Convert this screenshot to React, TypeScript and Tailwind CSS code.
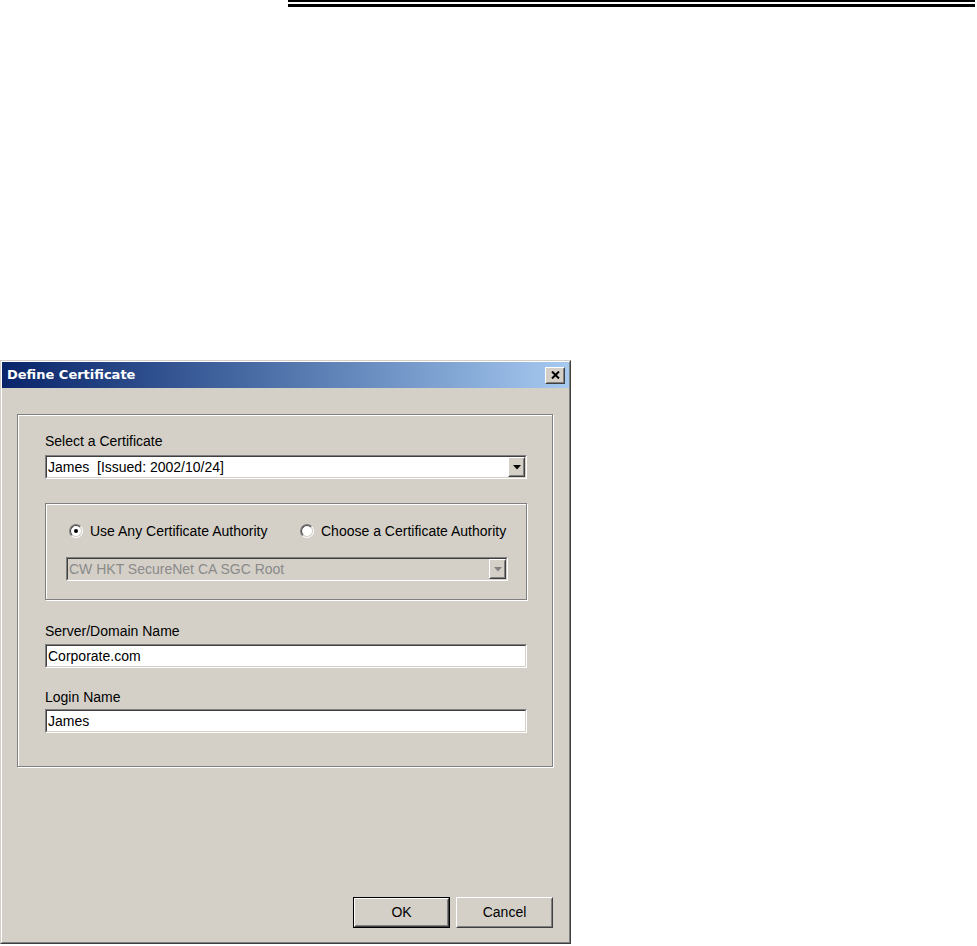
import type { ReactNode } from 'react';

// classic 3D bevels
const raisedOuter = 'border border-t-white border-l-white border-r-[#404040] border-b-[#404040]';
const raisedInner = 'border border-t-[#d4d0c8] border-l-[#d4d0c8] border-r-[#808080] border-b-[#808080]';
const sunkenOuter = 'border border-t-[#808080] border-l-[#808080] border-r-white border-b-white';
const sunkenInner = 'border border-t-[#404040] border-l-[#404040] border-r-[#d4d0c8] border-b-[#d4d0c8]';

function Arrow({ disabled = false }: { disabled?: boolean }) {
  return (
    <svg width="8" height="5" viewBox="0 0 8 5">
      <path d="M0 0h8L4 4.5z" fill={disabled ? '#808080' : '#000'} />
    </svg>
  );
}

function DropButton({ disabled = false }: { disabled?: boolean }) {
  return (
    <div className={`h-full w-[17px] ${raisedOuter} bg-[#d4d0c8]`}>
      <div className={`flex h-full items-center justify-center ${raisedInner}`}>
        <Arrow disabled={disabled} />
      </div>
    </div>
  );
}

function Field({
  children,
  width,
  combo = false,
  disabled = false,
}: {
  children: ReactNode;
  width: string;
  combo?: boolean;
  disabled?: boolean;
}) {
  return (
    <div className={`h-[24px] ${width} ${sunkenOuter}`}>
      <div className={`flex h-full items-center ${sunkenInner} ${disabled ? 'bg-[#d4d0c8]' : 'bg-white'}`}>
        <span
          className={`flex-1 whitespace-pre pl-[1px] leading-[16px] ${disabled ? 'text-[#8a8a8a]' : 'text-black'}`}
        >
          {children}
        </span>
        {combo && <DropButton disabled={disabled} />}
      </div>
    </div>
  );
}

function Radio({ label, checked = false, className = '' }: { label: string; checked?: boolean; className?: string }) {
  return (
    <div className={`flex items-center gap-[7px] ${className}`}>
      <div className="h-[14px] w-[14px] rounded-full border border-t-[#808080] border-l-[#808080] border-r-white border-b-white">
        <div className="flex h-full items-center justify-center rounded-full border border-t-[#404040] border-l-[#404040] border-r-[#d4d0c8] border-b-[#d4d0c8] bg-white">
          {checked && <div className="h-[4px] w-[4px] rounded-full bg-black" />}
        </div>
      </div>
      <span className="leading-[16px]">{label}</span>
    </div>
  );
}

function Button({ label, isDefault = false }: { label: string; isDefault?: boolean }) {
  return (
    <div className={`h-[31px] w-[97px] bg-[#d4d0c8] ${isDefault ? 'border border-black' : ''}`}>
      <div className={`h-full ${raisedOuter}`}>
        <div className={`flex h-full items-center justify-center ${raisedInner}`}>{label}</div>
      </div>
    </div>
  );
}

const groupBox = 'border border-[#808080] shadow-[1px_1px_0_#fff,inset_1px_1px_0_#fff]';

function Dialog() {
  return (
    <div className="mt-[353px] w-[571px] border border-t-[#d4d0c8] border-l-[#d4d0c8] border-r-[#404040] border-b-[#404040] bg-[#d4d0c8]">
      <div className="border border-t-white border-l-white border-r-[#808080] border-b-[#808080] pb-[14px]">
        {/* title bar */}
        <div className="flex h-[26px] items-center justify-between bg-linear-to-r from-[#0a246a] to-[#a6caf0] pl-[5px] pr-[4px]">
          <span className="font-['DejaVu_Sans',sans-serif] text-[13px] font-bold text-white">Define Certificate</span>
          <div className={`h-[17px] w-[20px] bg-[#d4d0c8] ${raisedOuter}`}>
            <div className={`flex h-full items-center justify-center ${raisedInner}`}>
              <svg width="9" height="8" viewBox="0 0 9 8">
                <path d="M1 0.5l7 7M8 0.5l-7 7" stroke="#000" strokeWidth="2" />
              </svg>
            </div>
          </div>
        </div>

        <div className="pl-[15px] pt-[26px]">
          <div className={`h-[353px] w-[536px] pl-[27px] pt-[18px] ${groupBox}`}>
            <div className="leading-[16px]">Select a Certificate</div>
            <div className="mt-[6px]">
              <Field width="w-[482px]" combo>
                {'James  [Issued: 2002/10/24]'}
              </Field>
            </div>

            <div className={`mt-[24px] h-[97px] w-[482px] pl-[20px] pt-[19px] ${groupBox}`}>
              <div className="flex pl-[3px]">
                <Radio label="Use Any Certificate Authority" checked className="w-[231px]" />
                <Radio label="Choose a Certificate Authority" />
              </div>
              <div className="mt-[18px]">
                <Field width="w-[442px]" combo disabled>
                  CW HKT SecureNet CA SGC Root
                </Field>
              </div>
            </div>

            <div className="mt-[23px] leading-[16px]">Server/Domain Name</div>
            <div className="mt-[5px]">
              <Field width="w-[482px]">Corporate.com</Field>
            </div>
            <div className="mt-[21px] leading-[16px]">Login Name</div>
            <div className="mt-[4px]">
              <Field width="w-[482px]">James</Field>
            </div>
          </div>

          <div className="mt-[130px] flex w-[536px] justify-end gap-[6px]">
            <Button label="OK" isDefault />
            <Button label="Cancel" />
          </div>
        </div>
      </div>
    </div>
  );
}

export default function App() {
  return (
    <div className="h-[946px] w-[977px] overflow-hidden bg-white font-['Liberation_Sans',Arial,sans-serif] text-[14px] text-black">
      {/* double rule at the top of the page */}
      <div className="ml-[288px] mr-[2px] flex flex-col gap-[2px]">
        <div className="h-[2px] bg-black" />
        <div className="h-[3px] bg-black" />
      </div>
      <Dialog />
    </div>
  );
}
